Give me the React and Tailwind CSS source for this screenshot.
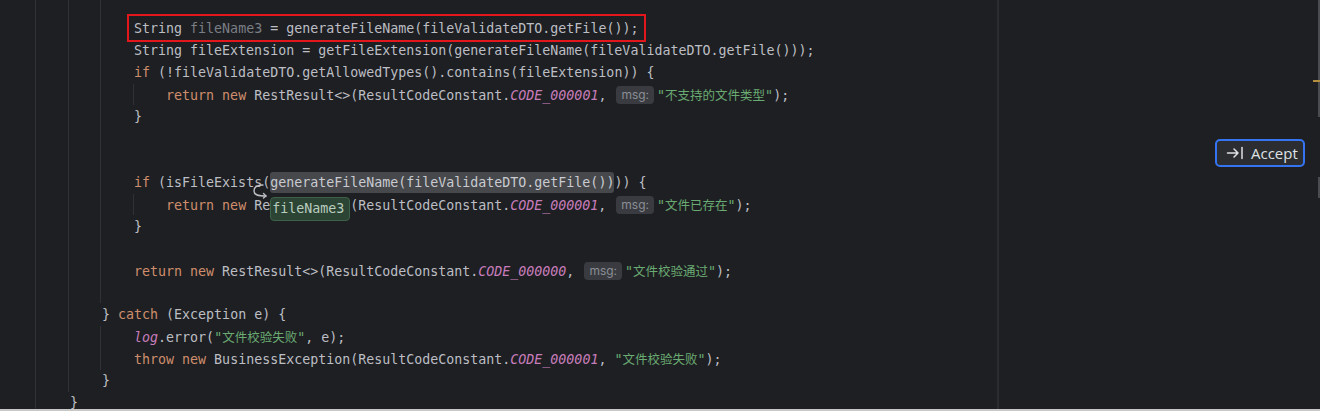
const MONO = 'font-["DejaVu_Sans_Mono","Liberation_Mono","Noto_Sans_CJK_SC",monospace]';

const Kw = ({ children }) => <span className="text-[#cf8e6d]">{children}</span>;
const Const = ({ children }) => <span className="italic text-[#c77dbb]">{children}</span>;
const Str = ({ children }) => (
  <span className="text-[#6aab73]">
    "<span className='font-["Noto_Sans_CJK_SC",sans-serif] text-[12.5px]'>{children}</span>"
  </span>
);
const Hint = ({ children }) => (
  <span className='ml-[2px] mr-[3px] inline-block h-[18px] rounded-[4px] bg-[#393b40] px-[5px] align-[1px] font-["Inter","Noto_Sans",sans-serif] text-[12px] leading-[18px] text-[#8b8e95]'>
    {children}
  </span>
);

function Line({ children, className = '' }) {
  return <div className={`relative h-[22px] whitespace-pre leading-[22px] ${className}`}>{children}</div>;
}

function Guide({ left, top = 0, height }) {
  return <span className="absolute w-px bg-[#303136]" style={{ left, top, height }} />;
}

function SuggestCurve() {
  return (
    <svg className="absolute left-[250px] top-[181px]" width="20" height="20" viewBox="0 0 20 20" fill="none">
      <path d="M13 4 C 7 4, 4 6, 4 10 C 4 14, 8 15, 16 15" stroke="#bcbec4" strokeWidth="1.4" strokeLinecap="round" />
      <path d="M13.5 12.5 L16 15 L13.5 17" stroke="#bcbec4" strokeWidth="1.4" strokeLinecap="round" strokeLinejoin="round" />
    </svg>
  );
}

function AcceptButton() {
  return (
    <button className="absolute left-[1215px] top-[139px] flex h-[28px] w-[90px] items-center gap-[7px] rounded-[5px] border-2 border-[#3574f0] bg-[#2b2d30] pl-[9px] text-[#dfe1e5]">
      <svg width="18" height="16" viewBox="0 0 18 16" fill="none">
        <path d="M1.5 8 H12 M8 4 L12 8 L8 12" stroke="#dfe1e5" strokeWidth="1.5" strokeLinecap="round" strokeLinejoin="round" />
        <path d="M16 2.5 V13.5" stroke="#dfe1e5" strokeWidth="1.5" strokeLinecap="round" />
      </svg>
      <span className='font-["Open_Sans","Noto_Sans",sans-serif] text-[15px] leading-none'>Accept</span>
    </button>
  );
}

export default function App() {
  return (
    <div className="relative flex h-[411px] w-[1320px] flex-col overflow-hidden bg-[#1e1f22]">
      <div className={`relative flex-1 overflow-hidden pl-[70px] pt-[18px] text-[13.3px] text-[#bcbec4] ${MONO}`}>
        {/* indent guides */}
        <Guide left={35} height={409} />
        <Guide left={68} height={392} />
        <Guide left={100} height={303} />
        <Guide left={100} top={326} height={44} />
        <Guide left={133} top={84} height={21} />
        <Guide left={133} top={194} height={21} />

        {/* right margin + scrollbar */}
        <span className="absolute left-[997px] top-0 h-full w-[2px] bg-[#2b2c30]" />
        <span className="absolute right-0 top-0 h-[117px] w-[2px] bg-[#4a4c52]" />
        <span className="absolute right-0 top-[177px] h-[21px] w-[2px] bg-[#4a4c52]" />
        <span className="absolute right-0 top-[80px] h-[2px] w-[7px] bg-[#b38e3f]" />

        <Line>
          <span className="absolute left-[57px] top-[-4px] h-[28px] w-[519px] border-2 border-[#e3161c]" />
          {'        String '}<span className="text-[#7a7e85]">fileName3</span>{' = generateFileName(fileValidateDTO.getFile());'}
        </Line>
        <Line>{'        String fileExtension = getFileExtension(generateFileName(fileValidateDTO.getFile()));'}</Line>
        <Line>{'        '}<Kw>if</Kw>{' (!fileValidateDTO.getAllowedTypes().contains(fileExtension)) {'}</Line>
        <Line>
          {'            '}<Kw>return new</Kw>{' RestResult<>(ResultCodeConstant.'}<Const>CODE_000001</Const>{', '}
          <Hint>msg:</Hint><Str>不支持的文件类型</Str>{');'}
        </Line>
        <Line>{'        }'}</Line>
        <Line />
        <Line />
        <Line>
          {'        '}<Kw>if</Kw>{' (isFileExists('}
          <span className="inline-block h-[21px] rounded-[3px] bg-[#46484c] align-top leading-[21px] text-[#c9cbd0]">generateFileName(fileValidateDTO.getFile())</span>
          {')) {'}
        </Line>
        <Line>
          {'            '}<Kw>return new</Kw>{' Re'}
          <span className="relative inline-block h-[22px] w-[80px] align-top">
            <span className="absolute left-0 top-[3px] flex h-[24px] w-[80px] items-center rounded-[4px] border border-[#3d6249] bg-[#2c4434] pl-[1px] text-[#b9cdbf]">fileName3</span>
          </span>
          {'(ResultCodeConstant.'}<Const>CODE_000001</Const>{', '}
          <Hint>msg:</Hint><Str>文件已存在</Str>{');'}
        </Line>
        <Line>{'        }'}</Line>
        <Line />
        <Line>
          {'        '}<Kw>return new</Kw>{' RestResult<>(ResultCodeConstant.'}<Const>CODE_000000</Const>{', '}
          <Hint>msg:</Hint><Str>文件校验通过</Str>{');'}
        </Line>
        <Line />
        <Line>{'    } '}<Kw>catch</Kw>{' (Exception e) {'}</Line>
        <Line>{'        '}<Const>log</Const>{'.error('}<Str>文件校验失败</Str>{', e);'}</Line>
        <Line>
          {'        '}<Kw>throw new</Kw>{' BusinessException(ResultCodeConstant.'}<Const>CODE_000001</Const>{', '}<Str>文件校验失败</Str>{');'}
        </Line>
        <Line>{'    }'}</Line>
        <Line>{'}'}</Line>

        <SuggestCurve />
        <AcceptButton />
      </div>
      <div className="h-[2px] bg-[#c8c8c8]" />
    </div>
  );
}
